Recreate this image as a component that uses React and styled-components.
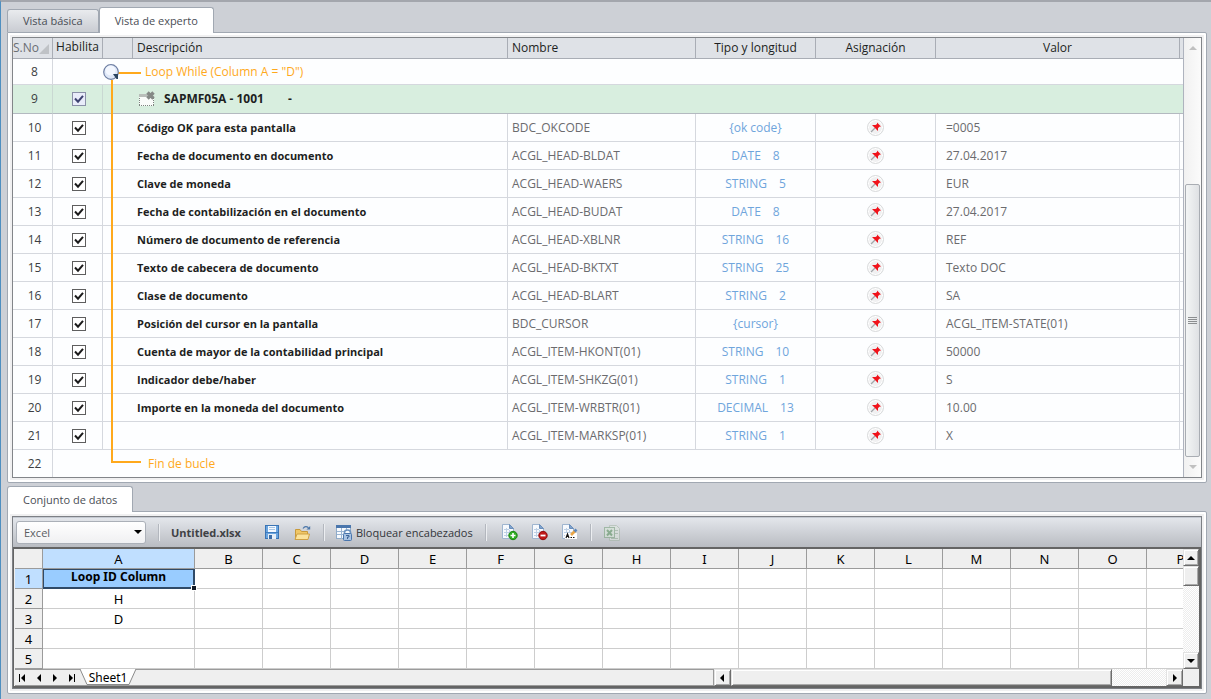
import React from 'react';
import styled, { createGlobalStyle, css } from 'styled-components';

const GlobalStyle = createGlobalStyle`
  *, *::before, *::after { box-sizing: border-box; }
  body {
    margin: 0;
    background: #cdd0d6;
    font: 12px/16px 'Open Sans', 'Noto Sans', sans-serif;
    color: #1d1f22;
  }
  button, input, select { font: inherit; color: inherit; margin: 0; }
  table { border-collapse: separate; border-spacing: 0; table-layout: fixed; }
`;

const Page = styled.main`
  min-height: 100vh;
  padding: 4px 4px 6px 6px;
  border-left: 1px solid #4f8fc0;
  border-top: 2px solid #a3a6ad;
`;

const TabList = styled.div`
  display: flex;
  align-items: flex-end;
  height: 26px;
  position: relative;
`;

const Tab = styled.button`
  height: ${(p) => (p.$active ? 26 : 23)}px;
  padding: 0 15px;
  border: 1px solid #a1a8b2;
  border-bottom: 0;
  border-radius: 3px 3px 0 0;
  background: ${(p) => (p.$active ? '#fff' : 'linear-gradient(#e9ebee, #c9ccd2)')};
  color: #4a4e55;
  font-size: 11px;
  margin-bottom: ${(p) => (p.$active ? -1 : 0)}px;
  z-index: ${(p) => (p.$active ? 1 : 0)};
`;

const Panel = styled.section`
  padding: 2px;
  border: 1px solid #a1a8b2;
  border-radius: 0 2px 2px 2px;
  background: #fff;
`;

const Inset = styled.div`
  border: 2px solid #f0f0f1;
`;

const Frame = styled.div`
  border: 1px solid #828589;
  background: #fdfeff;
  display: flex;
`;

const StepArea = styled.div`
  flex: 1;
  min-width: 0;
  position: relative;
`;

const StepTable = styled.table`
  width: 100%;
  border-right: 1px solid #aeb3be;
`;

const Head = styled.th`
  height: 21px;
  padding: 0 4px;
  border-right: 1px solid #a9adb5;
  border-bottom: 1px solid #a9adb5;
  background: #dfe2e7;
  font-weight: 400;
  text-align: ${(p) => p.$align || 'center'};
  white-space: nowrap;
  &:last-child { border-right: 0; }
`;

const EnableHead = styled(Head)`
  padding: 0 3px 2px;
`;

const SortHead = styled(Head)`
  padding: 0 3px 0 0;
  color: #6b6e74;
  text-align: left;
`;

const SortLabel = styled.span`
  display: flex;
  align-items: center;
  justify-content: space-between;
`;

const Cell = styled.td`
  height: 28px;
  padding: 0 ${(p) => p.$pad || 4}px;
  border-right: ${(p) => (p.$open ? '0' : '1px solid #d5d8de')};
  border-bottom: 1px solid #d5d8de;
  color: ${(p) => p.$color || '#6b6b6e'};
  text-align: ${(p) => p.$align || 'left'};
  white-space: nowrap;
  &:last-child { border-right: 0; }
`;

const NumberCell = styled(Cell)`
  padding: 0 0 0 4px;
  color: #3c3e42;
  text-align: center;
`;

const EnableCell = styled(Cell)`
  padding: 0 4px 0 6px;
`;

const DescriptionCell = styled(Cell)`
  color: #1d1f22;
  font-size: 11px;
  font-weight: 700;
`;

const StepRow = styled.tr`
  ${(p) => p.$screen && css`
    background: #d8eedf;
    ${Cell} { height: 29px; border-bottom-color: #b3b9c0; border-right-color: #c9d8d2; }
    ${Cell}:last-child { border-right: 0; }
  `}
  ${(p) => p.$first && css`${Cell} { height: 26px; }`}
  ${(p) => p.$last && css`${Cell} { height: 27px; border-bottom: 0; }`}
`;

const TypeLength = styled.span`
  display: flex;
  justify-content: center;
  gap: 12px;
  color: #6fa5dc;
`;

const ScreenTitle = styled.span`
  display: flex;
  align-items: center;
  gap: 8px;
  padding-left: 1px;
  font-size: 12px;
`;

const ScreenDash = styled.span`
  padding-left: 16px;
`;

const LoopLabel = styled.span`
  color: #ffa91c;
  padding-left: ${(p) => p.$indent}px;
`;

const LoopLine = styled.div`
  position: absolute;
  left: 98px;
  top: 42px;
  bottom: 14px;
  width: 30px;
  border-left: 2px solid #ffa91c;
  border-bottom: 2px solid #ffa91c;
  pointer-events: none;
`;

const LoopStart = styled.svg`
  position: absolute;
  left: 90px;
  top: 25px;
`;

const CheckWrap = styled.label`
  display: block;
  position: relative;
  width: 14px;
  height: 14px;
  margin: 0 auto;
  svg { position: absolute; left: 0; top: 0; pointer-events: none; }
`;

const CheckInput = styled.input`
  appearance: none;
  display: block;
  width: 14px;
  height: 14px;
  border: 1px solid ${(p) => (p.$soft ? '#8a90a8' : '#5e5e5e')};
  background: ${(p) => (p.$soft ? '#e9ecfa' : '#fff')};
`;

const PinButton = styled.button`
  display: block;
  width: 17px;
  height: 17px;
  margin: 0 auto;
  padding: 0;
  border: 1px solid #d9dbdc;
  border-radius: 50%;
  background: #f0f0f1;
  box-shadow: inset 0 0 0 1px #fff;
  svg { display: block; }
`;

const SoftScroll = styled.div`
  flex: 0 0 17px;
  display: flex;
  flex-direction: column;
  background: linear-gradient(90deg, #f1f1f1, #fbfbfb);
`;

const SoftArrow = styled.button`
  height: 20px;
  padding: 0;
  border: 0;
  background: none;
  svg { display: block; margin: 0 auto; }
`;

const SoftSpace = styled.div`flex: 7;`;

const SoftThumb = styled.div`
  flex: 15;
  display: flex;
  align-items: center;
  justify-content: center;
  margin: 0 1px;
  border: 1px solid #a9adb3;
  border-radius: 2px;
  background: linear-gradient(90deg, #f3f5f5, #dfe1e4);
`;

const LowerTabs = styled(TabList)`margin-top: 2px;`;

const DataFrame = styled.div`
  border: 1px solid #7d8085;
`;

const Toolbar = styled.div`
  display: flex;
  align-items: center;
  height: 30px;
  padding: 0 3px;
  border-top: 1px solid #c5cad2;
  background: linear-gradient(#e3e6eb, #b9bcc2);
  font-size: 11px;
`;

const SelectWrap = styled.div`
  position: relative;
  width: 130px;
  svg { position: absolute; right: 4px; top: 9px; pointer-events: none; }
`;

const Select = styled.select`
  appearance: none;
  display: block;
  width: 100%;
  height: 23px;
  padding: 0 7px;
  border: 1px solid #abb0b8;
  border-radius: 3px;
  background: linear-gradient(#fff, #f0f0f2);
  color: #5a5c60;
`;

const Separator = styled.span`
  width: 2px;
  height: 17px;
  border-left: 1px solid #b3b7be;
  border-right: 1px solid #eceef1;
  margin: 0 11px 0 12px;
`;

const FileName = styled.strong`
  color: #3f4145;
`;

const ToolButton = styled.button`
  display: flex;
  align-items: center;
  gap: 3px;
  padding: 0;
  border: 0;
  background: none;
  color: #33363a;
  margin-left: ${(p) => p.$gap || 0}px;
`;

const Sheet = styled.div`
  border: 2px solid #646464;
  border-left-width: 1px;
  background: #efefef;
  padding-left: 1px;
  font-family: 'Noto Sans', sans-serif;
  font-size: 13px;
  color: #000;
`;

const SheetBody = styled.div`
  display: flex;
`;

const GridView = styled.div`
  flex: 1;
  min-width: 0;
  overflow: hidden;
  background: #fff;
`;

const Grid = styled.table`
  width: 1200px;
`;

const ColHead = styled.th`
  height: 20px;
  padding: 0;
  border-right: 1px solid #9b9b9b;
  border-bottom: 1px solid #9b9b9b;
  background: ${(p) => (p.$selected ? '#c0dfff' : '#efefef')};
  font-weight: 400;
  line-height: 18px;
`;

const DataCell = styled.td`
  height: 20px;
  padding: 0;
  border-right: 1px solid #cdcdcd;
  border-bottom: 1px solid #cdcdcd;
  text-align: center;
  line-height: 18px;
`;

const SelectedCell = styled(DataCell)`
  position: relative;
  border: 2px solid #2f4a68;
  border-top-width: 1px;
  border-left-width: 1px;
  background: #99ccff;
  font-size: 12px;
  font-weight: 700;
  line-height: 14px;
  vertical-align: top;
  &::after {
    content: '';
    position: absolute;
    right: -4px;
    bottom: -4px;
    width: 6px;
    height: 6px;
    border: 1px solid #fff;
    background: #111a26;
  }
`;

const Track = styled.div`
  flex: 1;
  background: repeating-conic-gradient(#fff 0 25%, #ededed 0 50%) 0 0 / 2px 2px;
`;

const ClassicButton = styled.button`
  flex: 0 0 17px;
  min-width: 16px;
  display: flex;
  align-items: center;
  justify-content: center;
  padding: 0;
  border: 1px solid;
  border-color: #e2e2e2 #6d6d6d #6d6d6d #e2e2e2;
  background: #efefef;
  box-shadow: inset 1px 1px #fff, inset -1px -1px #a9a9a9;
`;

const ClassicThumb = styled.div`
  flex: ${(p) => p.$flex};
  border: 1px solid;
  border-color: #e2e2e2 #6d6d6d #6d6d6d #e2e2e2;
  background: #efefef;
  box-shadow: inset 1px 1px #fff, inset -1px -1px #a9a9a9;
`;

const VerticalBar = styled.div`
  flex: 0 0 16px;
  display: flex;
  flex-direction: column;
`;

const SheetFooter = styled.div`
  display: flex;
  height: 17px;
`;

const SheetTabs = styled.div`
  flex: 0 0 59%;
  display: flex;
  border: 1px solid #9b9b9b;
  border-left: 0;
`;

const NavButton = styled.button`
  width: 16px;
  padding: 0;
  border: 0;
  background: none;
  display: flex;
  align-items: center;
  justify-content: center;
`;

const SheetTab = styled.button`
  position: relative;
  width: 58px;
  height: 16px;
  margin-top: -1px;
  padding: 0;
  border: 0;
  background: none;
  font-size: 12px;
  line-height: 15px;
  svg { position: absolute; left: 0; top: 0; }
  span { position: relative; }
`;

const HorizontalBar = styled.div`
  flex: 1;
  display: flex;
`;

const Corner = styled.div`flex: 0 0 16px;`;

const steps = [
  ['10', 'Código OK para esta pantalla', 'BDC_OKCODE', '{ok code}', '', '=0005'],
  ['11', 'Fecha de documento en documento', 'ACGL_HEAD-BLDAT', 'DATE', '8', '27.04.2017'],
  ['12', 'Clave de moneda', 'ACGL_HEAD-WAERS', 'STRING', '5', 'EUR'],
  ['13', 'Fecha de contabilización en el documento', 'ACGL_HEAD-BUDAT', 'DATE', '8', '27.04.2017'],
  ['14', 'Número de documento de referencia', 'ACGL_HEAD-XBLNR', 'STRING', '16', 'REF'],
  ['15', 'Texto de cabecera de documento', 'ACGL_HEAD-BKTXT', 'STRING', '25', 'Texto DOC'],
  ['16', 'Clase de documento', 'ACGL_HEAD-BLART', 'STRING', '2', 'SA'],
  ['17', 'Posición del cursor en la pantalla', 'BDC_CURSOR', '{cursor}', '', 'ACGL_ITEM-STATE(01)'],
  ['18', 'Cuenta de mayor de la contabilidad principal', 'ACGL_ITEM-HKONT(01)', 'STRING', '10', '50000'],
  ['19', 'Indicador debe/haber', 'ACGL_ITEM-SHKZG(01)', 'STRING', '1', 'S'],
  ['20', 'Importe en la moneda del documento', 'ACGL_ITEM-WRBTR(01)', 'DECIMAL', '13', '10.00'],
  ['21', '', 'ACGL_ITEM-MARKSP(01)', 'STRING', '1', 'X'],
];

const columns = 'ABCDEFGHIJKLMNOP'.split('');
const loopIds = ['Loop ID Column', 'H', 'D', '', ''];

function Check({ label, soft }) {
  return (
    <CheckWrap>
      <CheckInput type="checkbox" defaultChecked aria-label={label} $soft={soft} />
      <svg width="14" height="14" viewBox="0 0 14 14">
        <path d="M3 6.5 L6 9.7 L11 3.8" fill="none" stroke={soft ? '#3d4270' : '#1b1b1b'} strokeWidth="2" />
      </svg>
    </CheckWrap>
  );
}

function PinIcon() {
  return (
    <svg width="15" height="15" viewBox="0 0 15 15">
      <path d="M3 12 L7 8" stroke="#a3a6aa" strokeWidth="1.2" />
      <path d="M4 5 L7.5 5 L9 4 L9 2.5 L13 6.5 L11.3 6.8 L10 8.2 L10 11 Z" fill="#f0121a" />
    </svg>
  );
}

function Triangle({ dir, color = '#000' }) {
  const s = 4;
  const shapes = {
    up: [2 * s, s, `0,${s} ${s},0 ${2 * s},${s}`],
    down: [2 * s, s, `0,0 ${2 * s},0 ${s},${s}`],
    left: [s, 2 * s, `${s},0 ${s},${2 * s} 0,${s}`],
    right: [s, 2 * s, `0,0 ${s},${s} 0,${2 * s}`],
  };
  const [w, h, points] = shapes[dir];
  return <svg width={w} height={h}><polygon points={points} fill={color} /></svg>;
}

function ScreenIcon() {
  return (
    <svg width="18" height="18" viewBox="0 0 18 18">
      <rect x="1" y="6" width="15" height="10" fill="#fafcfa" />
      <rect x="1" y="4" width="9" height="3" fill="#b9beba" />
      <path d="M1.5 8 V16 M15.5 8 V16 M1 15.5 H16" fill="none" stroke="#7d837f" strokeDasharray="1 1" />
      <path d="M9.5 2.5 L15.5 8.5 M15.5 2.5 L9.5 8.5" stroke="#858986" strokeWidth="3.4" />
    </svg>
  );
}

function SaveIcon() {
  return (
    <svg width="15" height="15" viewBox="0 0 15 15">
      <rect x=".5" y=".5" width="13" height="13" fill="#6aa5e0" stroke="#3a74b4" />
      <rect x="3" y="1" width="8" height="6" fill="#f4f9ff" />
      <path d="M4 2.5 H10 M4 4.5 H10" stroke="#a9c6e4" />
      <path d="M1 7.5 H13" stroke="#3f7cbd" />
      <rect x="3" y="9" width="8" height="5" fill="#e6eef7" />
      <rect x="4" y="10" width="3" height="4" fill="#3d6ea8" />
    </svg>
  );
}

function OpenIcon() {
  return (
    <svg width="17" height="16" viewBox="0 0 17 16">
      <path d="M1.5 14 V4.5 H6 L7.5 6.5 H13.5 V14 Z" fill="#f0c766" stroke="#c89a3c" />
      <path d="M1 14.5 L3 9 H15.5 L14 14.5 Z" fill="#fbe39c" stroke="#cfa145" />
      <path d="M9 3.5 Q11.5 .2 14.5 2.8" fill="none" stroke="#4d78aa" strokeWidth="1.2" />
      <path d="M12.5 4.5 H16.2 V1 Z" fill="#4d78aa" />
    </svg>
  );
}

function LockIcon() {
  return (
    <svg width="17" height="16" viewBox="0 0 17 16">
      <rect x=".5" y=".5" width="14" height="13" fill="#f7fafd" stroke="#8fabc9" />
      <rect x="0" y="0" width="15" height="3" fill="#4a76ad" />
      <path d="M5.5 3 V14 M10.5 3 V6 M1 6.5 H8 M1 9.5 H7" stroke="#9bb5d3" />
      <path d="M8.5 9 V7.5 Q8.5 5 11.5 5 Q14.5 5 14.5 7.5 V9" fill="none" stroke="#6d93bf" strokeWidth="1.6" />
      <rect x="7.5" y="8.5" width="8" height="7" rx="1" fill="#a9c3e2" stroke="#4a76ad" />
      <path d="M10 10.5 H13 V12 H11.5 V14" fill="none" stroke="#3d6598" />
    </svg>
  );
}

function PageIcon({ children }) {
  return (
    <svg width="17" height="17" viewBox="0 0 17 17">
      <path d="M1.5 .5 H8.5 L12.5 4.5 V14.5 H1.5 Z" fill="#f6f9fd" stroke="#9fb5cf" />
      <path d="M8.5 .5 V4.5 H12.5 Z" fill="#7fa3cf" stroke="#6b8fbb" />
      <path d="M3 5.5 H8 M3 8.5 H11 M3 11.5 H11 M5.5 4 V13 M8.5 6 V13" stroke="#bdd0e5" />
      {children}
    </svg>
  );
}

function ExportIcon() {
  return (
    <svg width="17" height="16" viewBox="0 0 17 16" opacity=".5">
      <path d="M5.5 .5 H12.5 L15.5 3.5 V15.5 H5.5 Z" fill="#dfe8df" stroke="#9fb3a0" />
      <path d="M11 5.5 H14 M11 8.5 H14 M7 13.5 H14" stroke="#8fac90" />
      <rect x=".5" y="2.5" width="10" height="10" fill="#d8e8d8" stroke="#6d9c70" />
      <path d="M3 5 L8 10.5 M8 5 L3 10.5" stroke="#47874b" strokeWidth="2" />
    </svg>
  );
}

function NavIcon({ dir, bar }) {
  const left = dir === 'left';
  return (
    <svg width="8" height="8" viewBox="0 0 8 8">
      <polygon points={left ? '6,0 6,8 2,4' : '2,0 2,8 6,4'} />
      {bar && <rect x={left ? 0 : 7} y="0" width="1" height="8" />}
    </svg>
  );
}

function StepsPanel() {
  return (
    <Panel>
      <Inset>
        <Frame>
          <StepArea>
            <StepTable>
              <colgroup>
                <col style={{ width: 40 }} />
                <col style={{ width: 50 }} />
                <col style={{ width: 30 }} />
                <col style={{ width: 375 }} />
                <col style={{ width: 188 }} />
                <col style={{ width: 120 }} />
                <col style={{ width: 120 }} />
                <col />
                <col style={{ width: 3 }} />
              </colgroup>
              <thead>
                <tr>
                  <SortHead>
                    <SortLabel>
                      S.No
                      <svg width="11" height="11"><polygon points="11,0 11,11 0,11" fill="#bfc2c6" /></svg>
                    </SortLabel>
                  </SortHead>
                  <EnableHead>Habilita</EnableHead>
                  <Head />
                  <Head $align="left">Descripción</Head>
                  <Head $align="left">Nombre</Head>
                  <Head>Tipo y longitud</Head>
                  <Head>Asignación</Head>
                  <Head>Valor</Head>
                  <Head />
                </tr>
              </thead>
              <tbody>
                <StepRow $first>
                  <NumberCell>8</NumberCell>
                  <Cell colSpan={8}>
                    <LoopLabel $indent={88}>Loop While (Column A = "D")</LoopLabel>
                  </Cell>
                </StepRow>
                <StepRow $screen>
                  <NumberCell>9</NumberCell>
                  <EnableCell><Check label="Habilitar 9" soft /></EnableCell>
                  <Cell $open />
                  <DescriptionCell colSpan={6}>
                    <ScreenTitle>
                      <ScreenIcon />
                      SAPMF05A - 1001
                      <ScreenDash>-</ScreenDash>
                    </ScreenTitle>
                  </DescriptionCell>
                </StepRow>
                {steps.map(([no, description, name, type, length, value]) => (
                  <StepRow key={no}>
                    <NumberCell>{no}</NumberCell>
                    <EnableCell><Check label={`Habilitar ${no}`} /></EnableCell>
                    <Cell $open />
                    <DescriptionCell>{description}</DescriptionCell>
                    <Cell>{name}</Cell>
                    <Cell>
                      <TypeLength>
                        <span>{type}</span>
                        {length && <span>{length}</span>}
                      </TypeLength>
                    </Cell>
                    <Cell>
                      <PinButton type="button" aria-label={`Asignación ${no}`}><PinIcon /></PinButton>
                    </Cell>
                    <Cell $pad={10}>{value}</Cell>
                    <Cell $pad={1} />
                  </StepRow>
                ))}
                <StepRow $last>
                  <NumberCell>22</NumberCell>
                  <Cell colSpan={8}>
                    <LoopLabel $indent={91}>Fin de bucle</LoopLabel>
                  </Cell>
                </StepRow>
              </tbody>
            </StepTable>
            <LoopLine />
            <LoopStart width="40" height="20" viewBox="0 0 40 20">
              <rect x="15" y="9" width="23" height="2" fill="#ffa91c" />
              <circle cx="8" cy="9" r="7.3" fill="#dfe8f8" stroke="#6f7fa3" strokeWidth="1.2" />
              <circle cx="7.5" cy="7.5" r="5" fill="#f3f7ff" />
              <path d="M10 11 H15 V16 H13.5 Z" fill="#2c4560" />
            </LoopStart>
          </StepArea>
          <SoftScroll>
            <SoftArrow type="button" aria-label="Subir"><Triangle dir="up" color="#c0c0c0" /></SoftArrow>
            <SoftSpace />
            <SoftThumb>
              <svg width="9" height="8">
                <path d="M0 .5 H9 M0 2.5 H9 M0 4.5 H9 M0 6.5 H9" stroke="#8b8e90" />
              </svg>
            </SoftThumb>
            <SoftArrow type="button" aria-label="Bajar"><Triangle dir="down" color="#c0c0c0" /></SoftArrow>
          </SoftScroll>
        </Frame>
      </Inset>
    </Panel>
  );
}

function DataToolbar() {
  return (
    <Toolbar>
      <SelectWrap>
        <Select aria-label="Origen de datos" defaultValue="Excel"><option>Excel</option></Select>
        <Triangle dir="down" />
      </SelectWrap>
      <Separator />
      <FileName>Untitled.xlsx</FileName>
      <ToolButton type="button" aria-label="Guardar" $gap={24}><SaveIcon /></ToolButton>
      <ToolButton type="button" aria-label="Abrir" $gap={14}><OpenIcon /></ToolButton>
      <Separator />
      <ToolButton type="button"><LockIcon />Bloquear encabezados</ToolButton>
      <Separator />
      <ToolButton type="button" aria-label="Añadir hoja" $gap={3}>
        <PageIcon>
          <circle cx="12" cy="11.5" r="4.2" fill="#2fae22" stroke="#1c8412" />
          <path d="M12 9 V14 M9.5 11.5 H14.5" stroke="#fff" strokeWidth="1.6" />
        </PageIcon>
      </ToolButton>
      <ToolButton type="button" aria-label="Eliminar hoja" $gap={13}>
        <PageIcon>
          <circle cx="12" cy="11.5" r="4.2" fill="#c01818" stroke="#8f0d0d" />
          <path d="M9.5 11.5 H14.5" stroke="#fff" strokeWidth="1.8" />
        </PageIcon>
      </ToolButton>
      <ToolButton type="button" aria-label="Renombrar hoja" $gap={13}>
        <PageIcon>
          <rect x="4" y="9" width="12" height="6" fill="#fff" />
          <path d="M5 14 L6.5 10 L8 14 M5.5 12.5 H7.5 M9.5 13.5 H11 M12 13.5 H13.5" stroke="#111" fill="none" strokeWidth="1.2" />
          <path d="M10 11 L14 7" stroke="#e8a548" strokeWidth="2.6" />
          <path d="M13.5 7.5 L15.5 5.5" stroke="#5b86ba" strokeWidth="2.6" />
        </PageIcon>
      </ToolButton>
      <Separator />
      <ToolButton type="button" aria-label="Exportar a Excel" disabled $gap={1}><ExportIcon /></ToolButton>
    </Toolbar>
  );
}

function Spreadsheet() {
  return (
    <Sheet>
      <SheetBody>
        <GridView>
          <Grid>
            <colgroup>
              <col style={{ width: 28 }} />
              <col style={{ width: 152 }} />
              {columns.slice(1).map((c) => <col key={c} style={{ width: 68 }} />)}
            </colgroup>
            <thead>
              <tr>
                <ColHead />
                {columns.map((c) => <ColHead key={c} $selected={c === 'A'}>{c}</ColHead>)}
              </tr>
            </thead>
            <tbody>
              {loopIds.map((value, i) => (
                <tr key={i}>
                  <ColHead $selected={i === 0}>{i + 1}</ColHead>
                  {i === 0 ? <SelectedCell>{value}</SelectedCell> : <DataCell>{value}</DataCell>}
                  {columns.slice(1).map((c) => <DataCell key={c} />)}
                </tr>
              ))}
            </tbody>
          </Grid>
        </GridView>
        <VerticalBar>
          <ClassicButton type="button" aria-label="Fila anterior"><Triangle dir="up" /></ClassicButton>
          <ClassicThumb $flex="0 0 20px" />
          <Track />
          <ClassicButton type="button" aria-label="Fila siguiente"><Triangle dir="down" /></ClassicButton>
        </VerticalBar>
      </SheetBody>
      <SheetFooter>
        <SheetTabs>
          <NavButton type="button" aria-label="Primera hoja"><NavIcon dir="left" bar /></NavButton>
          <NavButton type="button" aria-label="Hoja anterior"><NavIcon dir="left" /></NavButton>
          <NavButton type="button" aria-label="Hoja siguiente"><NavIcon dir="right" /></NavButton>
          <NavButton type="button" aria-label="Última hoja"><NavIcon dir="right" bar /></NavButton>
          <SheetTab type="button">
            <svg width="58" height="16" viewBox="0 0 58 16">
              <path d="M1 0 L8 15 H50 L57 0 Z" fill="#fff" />
              <path d="M1 0 L8 15.5 H50 L57 0" fill="none" stroke="#8b8b8b" />
            </svg>
            <span>Sheet1</span>
          </SheetTab>
        </SheetTabs>
        <HorizontalBar>
          <ClassicButton type="button" aria-label="Columna anterior"><Triangle dir="left" /></ClassicButton>
          <ClassicThumb $flex="7" />
          <Track />
          <ClassicButton type="button" aria-label="Columna siguiente"><Triangle dir="right" /></ClassicButton>
        </HorizontalBar>
        <Corner />
      </SheetFooter>
    </Sheet>
  );
}

export default function App() {
  return (
    <>
      <GlobalStyle />
      <Page>
        <TabList role="tablist">
          <Tab type="button" role="tab" aria-selected="false">Vista básica</Tab>
          <Tab type="button" role="tab" aria-selected="true" $active>Vista de experto</Tab>
        </TabList>
        <StepsPanel />
        <LowerTabs role="tablist">
          <Tab type="button" role="tab" aria-selected="true" $active>Conjunto de datos</Tab>
        </LowerTabs>
        <Panel>
          <Inset>
            <DataFrame>
              <DataToolbar />
              <Spreadsheet />
            </DataFrame>
          </Inset>
        </Panel>
      </Page>
    </>
  );
}
